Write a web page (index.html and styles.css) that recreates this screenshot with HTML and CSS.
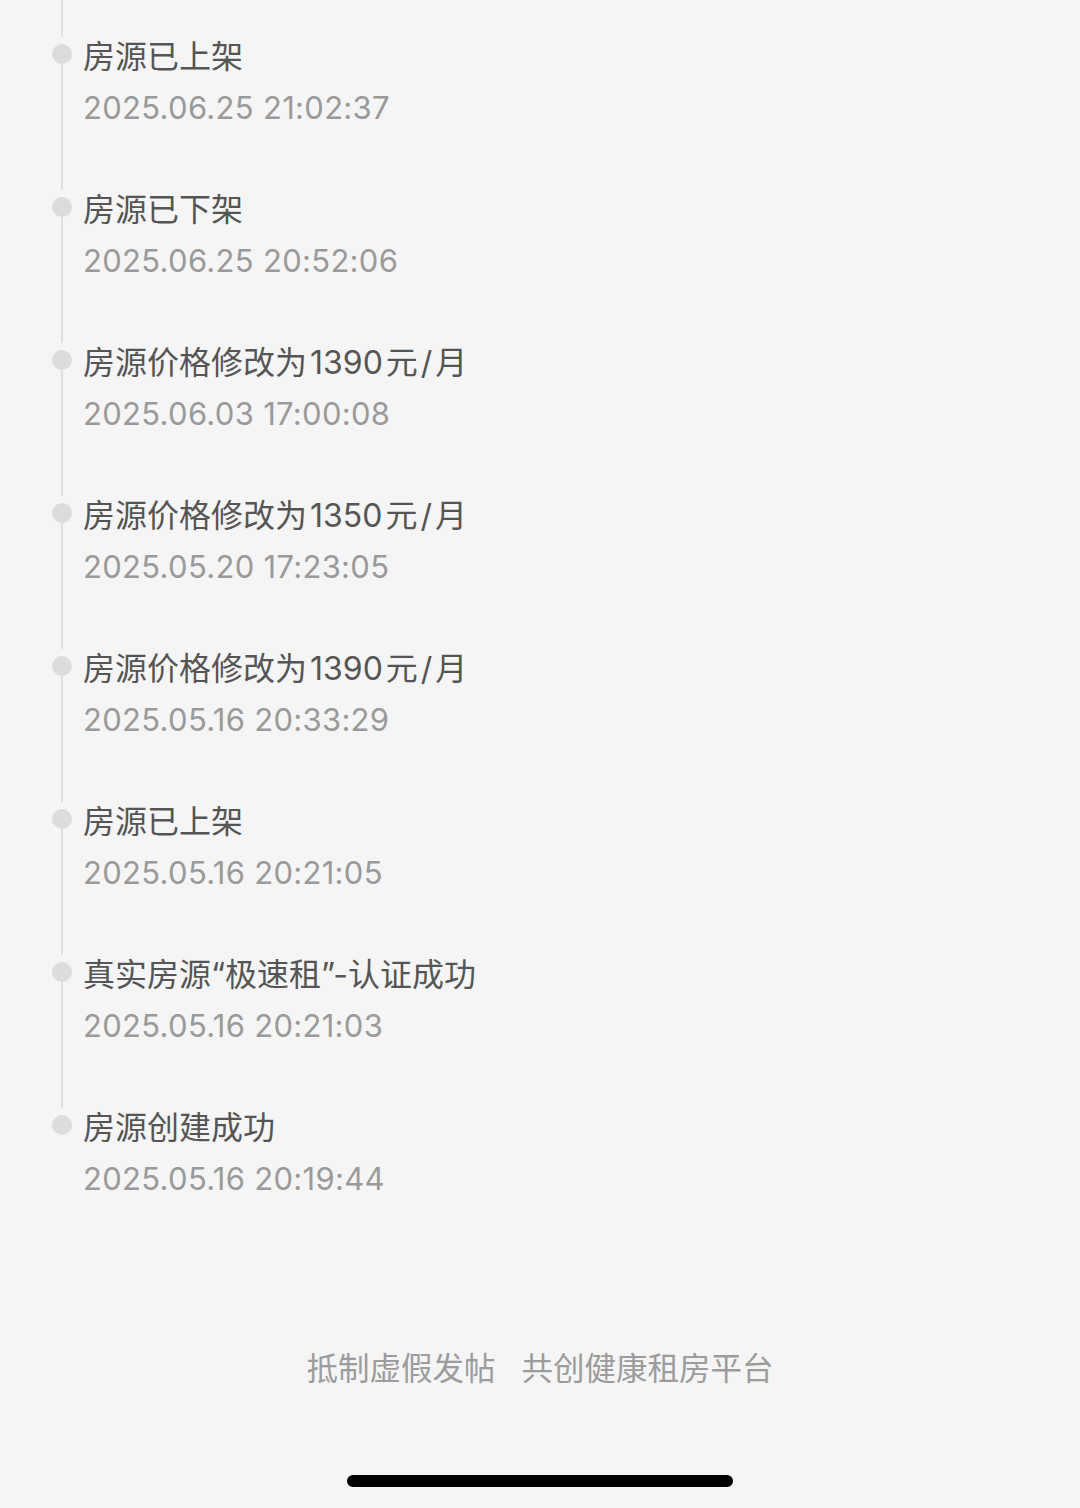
FILE: index.html
```html
<!DOCTYPE html>
<html lang="zh-CN">

<head>
    <meta charset="UTF-8">
    <meta name="viewport" content="width=device-width, initial-scale=1.0">
    <title>房源动态</title>
    <link rel="stylesheet" href="styles.css">
</head>

<body>
    <div class="timeline">
        <div class="lead"></div>

        <div class="item">
            <div class="axis"><span class="dot"></span><span class="line"></span></div>
            <div class="info">
                <p class="title">房源已上架</p>
                <p class="time">2025.06.25 21:02:37</p>
            </div>
        </div>

        <div class="item">
            <div class="axis"><span class="dot"></span><span class="line"></span></div>
            <div class="info">
                <p class="title">房源已下架</p>
                <p class="time">2025.06.25 20:52:06</p>
            </div>
        </div>

        <div class="item">
            <div class="axis"><span class="dot"></span><span class="line"></span></div>
            <div class="info">
                <p class="title">房源价格修改为 1390 元 / 月</p>
                <p class="time">2025.06.03 17:00:08</p>
            </div>
        </div>

        <div class="item">
            <div class="axis"><span class="dot"></span><span class="line"></span></div>
            <div class="info">
                <p class="title">房源价格修改为 1350 元 / 月</p>
                <p class="time">2025.05.20 17:23:05</p>
            </div>
        </div>

        <div class="item">
            <div class="axis"><span class="dot"></span><span class="line"></span></div>
            <div class="info">
                <p class="title">房源价格修改为 1390 元 / 月</p>
                <p class="time">2025.05.16 20:33:29</p>
            </div>
        </div>

        <div class="item">
            <div class="axis"><span class="dot"></span><span class="line"></span></div>
            <div class="info">
                <p class="title">房源已上架</p>
                <p class="time">2025.05.16 20:21:05</p>
            </div>
        </div>

        <div class="item">
            <div class="axis"><span class="dot"></span><span class="line"></span></div>
            <div class="info">
                <p class="title">真实房源“极速租”-认证成功</p>
                <p class="time">2025.05.16 20:21:03</p>
            </div>
        </div>

        <div class="item">
            <div class="axis"><span class="dot"></span></div>
            <div class="info">
                <p class="title">房源创建成功</p>
                <p class="time">2025.05.16 20:19:44</p>
            </div>
        </div>
    </div>

    <div class="footer">
        <span>抵制虚假发帖</span>
        <span>共创健康租房平台</span>
    </div>

    <div class="home-bar"></div>
</body>

</html>
```

FILE: styles.css
```css
body {
    margin: 0;
    background: #f5f5f5;
    font-family: 'Inter', 'Noto Sans CJK SC', sans-serif;
}

.timeline {
    padding-left: 52px;
}

.lead {
    width: 2px;
    height: 37px;
    margin-left: 9px;
    background: #e0e0e0;
}

.item {
    display: flex;
    gap: 11px;
    height: 153px;
}

.axis {
    width: 20px;
    display: flex;
    flex-direction: column;
    align-items: center;
    padding-top: 7px;
}

.dot {
    width: 20px;
    height: 20px;
    border-radius: 50%;
    background: #dcdcdc;
    flex-shrink: 0;
}

.line {
    flex: 1;
    width: 2px;
    background: #e0e0e0;
}

.info p {
    margin: 0;
    line-height: 40px;
}

.title {
    font-size: 32px;
    color: #555555;
    word-spacing: -6px;
}

.time {
    margin-top: 11px !important;
    font-size: 31px;
    letter-spacing: 0.3px;
    color: #9a9a9a;
}

.footer {
    display: flex;
    justify-content: center;
    gap: 26px;
    margin-top: 88px;
    font-size: 31.5px;
    line-height: 40px;
    color: #9c9c9c;
}

.home-bar {
    width: 386px;
    height: 12px;
    margin: 86px auto 0;
    border-radius: 6px;
    background: #000;
}
```
